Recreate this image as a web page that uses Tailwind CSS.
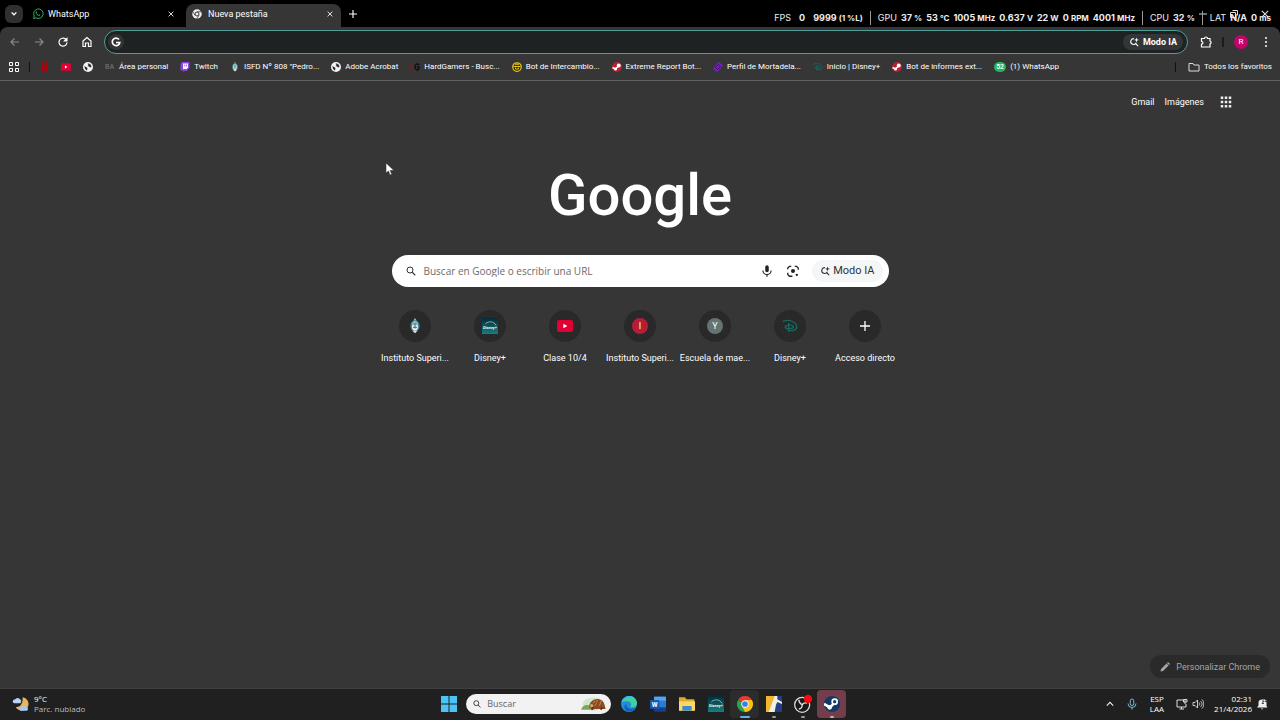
<!DOCTYPE html>
<html lang="es">
<head>
    <meta charset="UTF-8">
    <meta name="viewport" content="width=device-width, initial-scale=1.0">
    <title>Nueva pestaña</title>
    <script src="https://cdn.jsdelivr.net/npm/@tailwindcss/browser@4"></script>
</head>
<body class="relative flex flex-col min-h-screen bg-[#363636] text-white text-[8px] leading-3 font-['Roboto',sans-serif] overflow-x-hidden">

    <!-- Shared icons -->
    <svg class="absolute size-0">
        <symbol id="globe" viewBox="0 0 20 20">
            <circle cx="10" cy="10" r="10" fill="#f4f4f4"/>
            <path fill="#303030" d="M3 8l5 3 1 2-1 4c-3-1-5-4-5-9zM9 3c4-1 8 2 8 7l-3 1-2-2-3-1 2-2z"/>
        </symbol>
        <symbol id="steam" viewBox="0 0 20 20">
            <circle cx="10" cy="10" r="10" fill="#b3202f"/>
            <path d="M1 11l6 3 6-6" stroke="#fff" stroke-width="3.5" fill="none"/>
            <circle cx="13.5" cy="7" r="4" fill="#fff"/>
            <circle cx="7" cy="14" r="3" fill="#fff"/>
        </symbol>
        <symbol id="youtube" viewBox="0 0 24 18">
            <rect width="24" height="18" rx="3" fill="#e00034"/>
            <path d="M9.500 5.500v7l6-3.500z" fill="#fff"/>
        </symbol>
        <symbol id="emblem" viewBox="0 0 16 24">
            <path d="M5.500 4L8 0l2.500 4z" fill="#d8b45a"/>
            <ellipse cx="8" cy="12" rx="7" ry="8.500" fill="#3f8a8c"/>
            <ellipse cx="8" cy="12" rx="4.500" ry="7" fill="#eef3f5"/>
            <path d="M3.500 11a4.500 6 0 0 1 9 0z" fill="#6fb4d8"/>
            <path d="M5 14h6M8 8v8" stroke="#7a5a3a" stroke-width="1.500"/>
            <path d="M4 19l4 4 4-4z" fill="#d8e4ea"/>
        </symbol>
        <symbol id="disney-d" viewBox="0 0 24 20">
            <path d="M2 3c8-4 20 1 20 8 0 6-8 7-13 5M8 9c-5 1-4 5 2 5 5 0 8-1 7-3s-5-3-9-2M10 6v12" stroke="#17695f" stroke-width="2" fill="none" stroke-linecap="round"/>
        </symbol>
        <linearGradient id="tile" x1="0" y1="0" x2="0" y2="1">
            <stop offset="0" stop-color="#062a38"/>
            <stop offset="1" stop-color="#11827f"/>
        </linearGradient>
        <symbol id="search-spark" viewBox="0 0 24 24">
            <path d="M12 4a7 7 0 1 0 5.500 10M15 15l7 7" stroke="currentColor" stroke-width="2.600" fill="none"/>
            <path d="M18 1l1.500 4.500L24 7l-4.500 1.500L18 13l-1.500-4.500L12 7l4.500-1.500z" fill="currentColor"/>
        </symbol>
        <symbol id="close" viewBox="0 0 10 10">
            <path d="M1 1l8 8M9 1l-8 8" stroke="currentColor" stroke-width="1.400"/>
        </symbol>
        <symbol id="magnifier" viewBox="0 0 20 20">
            <circle cx="8" cy="8" r="6" fill="none" stroke="currentColor" stroke-width="2"/>
            <path d="M12.500 12.500l6 6" stroke="currentColor" stroke-width="2.200"/>
        </symbol>
    </svg>

    <!-- Tab strip -->
    <header class="flex items-end h-[27px] bg-black pl-[5px]">
        <button aria-label="Buscar pestañas" class="self-center size-[18px] rounded-md bg-[#303030] flex items-center justify-center">
            <svg class="size-2" viewBox="0 0 10 10"><path d="M2 3l3 3 3-3" stroke="#fff" stroke-width="1.600" fill="none"/></svg>
        </button>
        <div class="flex items-center h-[23px] w-[155px] pl-[9px] pr-1 pb-1">
            <svg class="size-3" viewBox="0 0 24 24">
                <path d="M3 21l1.500-5A9.500 9.500 0 1 1 8 19.600z" stroke="#27b357" stroke-width="2" fill="none"/>
                <path d="M8 7c1-1 2 0 2 2l-1 1c1 2 2 3 4 4l1-1c2 0 3 1 2 2-3 3-11-4-8-8z" fill="#27b357"/>
            </svg>
            <span class="ml-1 grow text-[9px]">WhatsApp</span>
            <button aria-label="Cerrar WhatsApp"><svg class="size-1.5"><use href="#close"/></svg></button>
        </div>
        <div class="flex items-center h-[23px] w-[155px] pl-1.5 pr-2 pb-1 ml-2 rounded-t-lg bg-[#363636]">
            <svg class="size-2.5" viewBox="0 0 20 20">
                <circle cx="10" cy="10" r="9.500" fill="#eee"/>
                <path d="M10 5.500h9M6 12.500l-4.500-7.500M14 12.500l-4.500 7.500" stroke="#363636" stroke-width="1.500"/>
                <circle cx="10" cy="10" r="4" fill="#eee" stroke="#363636" stroke-width="2"/>
            </svg>
            <span class="ml-1.5 grow text-[9px]">Nueva pestaña</span>
            <button aria-label="Cerrar Nueva pestaña"><svg class="size-1.5"><use href="#close"/></svg></button>
        </div>
        <button aria-label="Nueva pestaña" class="self-center ml-2">
            <svg class="size-2" viewBox="0 0 10 10"><path d="M5 0v10M0 5h10" stroke="#fff" stroke-width="1.400"/></svg>
        </button>
        <div class="ml-auto self-center flex items-center gap-[23px] pr-[11px]">
            <button aria-label="Minimizar"><svg class="size-2" viewBox="0 0 8 8"><path d="M0 4h8" stroke="#ddd"/></svg></button>
            <button aria-label="Restaurar"><svg class="size-2" viewBox="0 0 8 8"><path d="M.5 2.500h5v5h-5zM2.500.5h5v5" stroke="#ddd" fill="none"/></svg></button>
            <button aria-label="Cerrar"><svg class="size-2 text-[#ddd]"><use href="#close"/></svg></button>
        </div>
    </header>

    <!-- Performance overlay -->
    <div class="absolute top-3 right-[9px] flex items-center h-3 text-[9px] font-['Inter',sans-serif] font-bold text-[#eee] whitespace-nowrap">
        <span class="font-normal">FPS</span>
        <span class="ml-2">0</span>
        <span class="ml-2">9999 <small class="text-[8px]">(1 %L)</small></span>
        <span class="w-px h-3.5 mx-[7px] bg-[#999]"></span>
        <span class="font-normal">GPU</span>
        <span class="ml-1">37 <small class="text-[8px]">%</small></span>
        <span class="ml-1">53 <small class="text-[8px]">°C</small></span>
        <span class="ml-1">1005 <small class="text-[8px]">MHz</small></span>
        <span class="ml-1">0.637 <small class="text-[8px]">V</small></span>
        <span class="ml-1">22 <small class="text-[8px]">W</small></span>
        <span class="ml-1">0 <small class="text-[8px]">RPM</small></span>
        <span class="ml-1">4001 <small class="text-[8px]">MHz</small></span>
        <span class="w-px h-3.5 mx-[7px] bg-[#999]"></span>
        <span class="font-normal">CPU</span>
        <span class="ml-1">32 <small class="text-[8px]">%</small></span>
        <span class="w-px h-3.5 mx-[7px] bg-[#999]"></span>
        <span class="font-normal">LAT</span>
        <span class="ml-1">N/A</span>
        <span class="ml-1">0 <small class="text-[8px]">ms</small></span>
    </div>

    <!-- Toolbar -->
    <div class="bg-black">
    <div class="flex items-center h-[29px] px-2 rounded-t-lg bg-[#363636]">
        <nav class="flex items-center gap-3 pl-px">
            <button aria-label="Atrás"><svg class="size-3 text-[#8a8a8a]" viewBox="0 0 24 24"><path d="M20 12H4M11 5l-7 7 7 7" stroke="currentColor" stroke-width="2.400" fill="none"/></svg></button>
            <button aria-label="Adelante"><svg class="size-3 text-[#8a8a8a]" viewBox="0 0 24 24"><path d="M4 12h16M13 5l7 7-7 7" stroke="currentColor" stroke-width="2.400" fill="none"/></svg></button>
            <button aria-label="Recargar"><svg class="size-3" viewBox="0 0 24 24"><path d="M20 13a8 8 0 1 1-3-7l3 3" stroke="#fff" stroke-width="2.400" fill="none"/><path d="M21 2v9h-9z" fill="#fff"/></svg></button>
            <button aria-label="Inicio"><svg class="size-3" viewBox="0 0 24 24"><path d="M4 10l8-7 8 7v11h-5v-7H9v7H4z" stroke="#fff" stroke-width="2.400" fill="none"/></svg></button>
        </nav>
        <label class="flex items-center grow h-6 ml-[11px] pl-[3px] pr-1 rounded-full border border-[#4f9f98] bg-[#1f2223]">
            <span class="size-4 rounded-full bg-[#333] flex items-center justify-center">
                <svg class="size-2.5" viewBox="0 0 20 20"><path d="M16 5a7.500 7.500 0 1 0 1.500 6H10" stroke="#fff" stroke-width="3.400" fill="none"/></svg>
            </span>
            <input type="text" aria-label="Barra de direcciones" class="grow bg-transparent outline-none px-2">
            <button class="flex items-center gap-1 h-4 px-1.5 rounded-full bg-[#333638] text-[9px] font-bold whitespace-nowrap">
                <svg class="size-2.5"><use href="#search-spark"/></svg>Modo IA
            </button>
        </label>
        <button aria-label="Extensiones" class="ml-3">
            <svg class="size-3" viewBox="0 0 24 24"><path d="M3 5h6c0-4 6-4 6 0h5v5c3 1 3 5 0 6v6H3v-6c4 0 4-5 0-5z" stroke="#fff" stroke-width="2.400" fill="none"/></svg>
        </button>
        <span class="w-0.5 h-2.5 bg-[#1c1c1c] ml-2.5"></span>
        <button class="size-3.5 ml-2.5 rounded-full bg-[#c2056b] text-center leading-[14px]">R</button>
        <button aria-label="Menú" class="ml-3"><svg class="size-3" viewBox="0 0 12 12" fill="#fff"><circle cx="6" cy="2" r="1"/><circle cx="6" cy="6" r="1"/><circle cx="6" cy="10" r="1"/></svg></button>
    </div>
    </div>

    <!-- Bookmarks -->
    <nav class="flex items-center gap-3 h-[25px] px-2 pb-[3px] border-b border-[#606060] whitespace-nowrap">
        <button aria-label="Grupos de pestañas"><svg class="size-3" viewBox="0 0 12 12"><path d="M1.500 1.500h3v3h-3zM7.500 1.500h3v3h-3zM1.500 7.500h3v3h-3zM7.500 7.500h3v3h-3z" stroke="#fff" fill="none"/></svg></button>
        <span class="w-px h-2.5 -mx-[3px] bg-[#111]"></span>
        <a href="#" aria-label="Netflix"><svg class="size-2.5" viewBox="0 0 10 10"><path d="M2 0h2l2 5V0h2v10H6L4 5v5H2z" fill="#b00010"/></svg></a>
        <a href="#" aria-label="YouTube"><svg class="w-2.5 h-2"><use href="#youtube"/></svg></a>
        <a href="#" aria-label="Sitio"><svg class="size-2.5"><use href="#globe"/></svg></a>
        <a href="#" class="flex items-center gap-1"><span class="w-2.5 text-[7px] font-bold text-[#666]">BA</span>Área personal</a>
        <a href="#" class="flex items-center gap-1">
            <svg class="size-2.5" viewBox="0 0 20 20"><path d="M4 0h15v12l-6 6H9l-3 2v-3H1V4z" fill="#8a43e8"/><path d="M6 3h10v8l-3 3H6z" fill="#fff"/><path d="M9.500 5v4M13 5v4" stroke="#8a43e8" stroke-width="1.600"/></svg>Twitch
        </a>
        <a href="#" class="flex items-center gap-1"><svg class="size-2.5"><use href="#emblem"/></svg>ISFD Nº 808 "Pedro...</a>
        <a href="#" class="flex items-center gap-1"><svg class="size-2.5"><use href="#globe"/></svg>Adobe Acrobat</a>
        <a href="#" class="flex items-center gap-1">
            <svg class="size-2.5" viewBox="0 0 20 20"><path d="M2 3v14M2 10h5M7 3v14" stroke="#8a1418" stroke-width="2"/><path d="M18 6c-3-4-8-2-8 4s6 8 8 3v-3h-4" stroke="#111" stroke-width="3" fill="none"/></svg>HardGamers - Busc...
        </a>
        <a href="#" class="flex items-center gap-1">
            <svg class="size-2.5" viewBox="0 0 20 20"><circle cx="10" cy="10" r="8.500" stroke="#e8c81c" stroke-width="2.500" fill="#2a2710"/><path d="M3 9h14M6 6l4-2 4 2M7 11v3h6v-3" stroke="#e8c81c" stroke-width="2" fill="none"/></svg>Bot de Intercambio...
        </a>
        <a href="#" class="flex items-center gap-1"><svg class="size-2.5"><use href="#steam"/></svg>Extreme Report Bot...</a>
        <a href="#" class="flex items-center gap-1">
            <svg class="size-2.5" viewBox="0 0 20 20"><path d="M12 0l8 7-12 13-8-7z" fill="#8a12e0"/><path d="M11 5l4 4-6 6-4-4z" stroke="#3a0868" stroke-width="2" fill="none"/></svg>Perfil de Mortadela...
        </a>
        <a href="#" class="flex items-center gap-1"><svg class="size-2.5"><use href="#disney-d"/></svg>Inicio | Disney+</a>
        <a href="#" class="flex items-center gap-1"><svg class="size-2.5"><use href="#steam"/></svg>Bot de informes ext...</a>
        <a href="#" class="flex items-center gap-1"><span class="w-3 h-2.5 rounded-full bg-[#25b35a] text-[7px] leading-[10px] text-center font-semibold">52</span>(1) WhatsApp</a>
        <span class="ml-auto w-px h-2.5 bg-[#111]"></span>
        <a href="#" class="flex items-center gap-1"><svg class="size-3" viewBox="0 0 24 24"><path d="M2 5h8l2 3h10v12H2z" stroke="#ddd" stroke-width="2" fill="none"/></svg>Todos los favoritos</a>
    </nav>

    <!-- New tab page -->
    <main class="relative grow flex flex-col">
        <div class="flex justify-end items-center gap-2.5 pr-12 pt-3.5 h-7 text-[9px]">
            <a href="#">Gmail</a>
            <a href="#">Imágenes</a>
            <button aria-label="Aplicaciones de Google" class="ml-1.5">
                <svg class="size-3" viewBox="0 0 12 12"><path d="M2 .5v11M6 .5v11M10 .5v11" stroke="#eee" stroke-width="2.500" stroke-dasharray="2.500 1.750"/></svg>
            </button>
        </div>
        <h1 class="mt-10 h-[106px] text-center text-[58px] leading-[92px] font-medium">Google</h1>
        <label class="flex items-center w-[497px] h-8 mx-auto pl-3.5 pr-1.5 rounded-full bg-white text-[#333]">
            <svg class="size-2.5"><use href="#magnifier"/></svg>
            <input type="text" placeholder="Buscar en Google o escribir una URL" class="grow ml-2 text-[10px] font-['Open_Sans',sans-serif] outline-none placeholder:text-[#6b6b6b]">
            <button aria-label="Buscar por voz"><svg class="size-3.5" viewBox="0 0 24 24"><rect x="9" y="2" width="6" height="12" rx="3" fill="#222"/><path d="M5 11a7 7 0 0 0 14 0M12 18v4" stroke="#222" stroke-width="2" fill="none"/></svg></button>
            <button aria-label="Buscar por imagen" class="ml-3"><svg class="size-3.5" viewBox="0 0 24 24"><path d="M3 9V7l3-3h3M15 4h3l3 3v3M3 15v3l3 3h5" stroke="#222" stroke-width="2.200" fill="none"/><circle cx="12" cy="12" r="3.500" fill="#222"/><circle cx="18.500" cy="18.500" r="2" fill="#222"/></svg></button>
            <button class="flex items-center gap-[3px] h-[22px] ml-3 px-2 rounded-full bg-[#f5f6f8] text-[11px] whitespace-nowrap"><svg class="size-2.5"><use href="#search-spark"/></svg>Modo IA</button>
        </label>
        <div class="grid grid-cols-7 w-[525px] mx-auto mt-[23px] text-center text-[9px] whitespace-nowrap">
            <a href="#" class="flex flex-col items-center gap-2.5"><span class="size-8 rounded-full bg-[#292929] flex items-center justify-center"><svg class="size-4"><use href="#emblem"/></svg></span>Instituto Superi...</a>
            <a href="#" class="flex flex-col items-center gap-2.5"><span class="size-8 rounded-full bg-[#292929] flex items-center justify-center"><svg class="size-4" viewBox="0 0 24 24"><rect width="24" height="24" fill="url(#tile)"/><path d="M5 9c5-5 13-4 16 2" stroke="#b9e6e6" fill="none"/><text x="12" y="16" font-size="6" font-weight="700" font-style="italic" text-anchor="middle" fill="#e8ffff">Disney+</text></svg></span>Disney+</a>
            <a href="#" class="flex flex-col items-center gap-2.5"><span class="size-8 rounded-full bg-[#292929] flex items-center justify-center"><svg class="w-4 h-3"><use href="#youtube"/></svg></span>Clase 10/4</a>
            <a href="#" class="flex flex-col items-center gap-2.5"><span class="size-8 rounded-full bg-[#292929] flex items-center justify-center"><span class="size-4 leading-4 rounded-full bg-[#b51e33]">I</span></span>Instituto Superi...</a>
            <a href="#" class="flex flex-col items-center gap-2.5"><span class="size-8 rounded-full bg-[#292929] flex items-center justify-center"><span class="size-4 leading-4 rounded-full bg-[#66736f]">Y</span></span>Escuela de mae...</a>
            <a href="#" class="flex flex-col items-center gap-2.5"><span class="size-8 rounded-full bg-[#292929] flex items-center justify-center"><svg class="size-4"><use href="#disney-d"/></svg></span>Disney+</a>
            <button class="flex flex-col items-center gap-2.5"><span class="size-8 rounded-full bg-[#292929] flex items-center justify-center"><svg class="size-2.5" viewBox="0 0 10 10"><path d="M5 0v10M0 5h10" stroke="#fff" stroke-width="1.300"/></svg></span>Acceso directo</button>
        </div>
        <button class="absolute right-2.5 bottom-2.5 flex items-center gap-1.5 h-[23px] px-2.5 rounded-full bg-[#2a2a2a] text-[#a5a5a5] text-[9px]">
            <svg class="size-2.5" viewBox="0 0 20 20"><path d="M1 19l1-5L13 3l4 4L6 18zM14 2l2-2 4 4-2 2z" fill="#a5a5a5"/></svg>Personalizar Chrome
        </button>
        <!-- Mouse pointer -->
        <svg class="absolute left-[386px] top-[82px] w-2 h-3" viewBox="0 0 8 12"><path d="M0 0v10l2.500-2L4 12l1.800-.8L4.200 7.500H8z" fill="#fff" stroke="#222" stroke-width=".5"/></svg>
    </main>

    <!-- Taskbar -->
    <footer class="grid grid-cols-[1fr_auto_1fr] items-center h-8 pb-px bg-[#202020] border-t border-[#404040]">
        <button class="flex items-center gap-1 pl-3 text-left leading-2.5 font-['Open_Sans',sans-serif]">
            <svg class="size-[18px]" viewBox="0 0 24 24"><path d="M14 3a9 9 0 1 1-9 13c6 1 10-5 9-13z" fill="#e9b45a"/><path d="M3 11h8a3 3 0 0 0 0-5 4 4 0 0 0-7 0 2.500 2.500 0 0 0-1 5z" fill="#bcd3f5"/><path d="M12 21h8a3 3 0 0 0 0-5 4 4 0 0 0-7 0 2.500 2.500 0 0 0-1 5z" fill="#a7c6f2"/></svg>
            <span>9°C<br><span class="text-[#bbb]">Parc. nublado</span></span>
        </button>
        <div class="flex items-center">
            <button aria-label="Inicio" class="w-[29px] flex justify-center"><svg class="size-4" viewBox="0 0 16 16"><path d="M0 0h7.500v7.500H0zM8.500 0H16v7.500H8.500zM0 8.500h7.500V16H0zM8.500 8.500H16V16H8.500z" fill="#4cc2f5"/></svg></button>
            <label class="flex items-center w-[145px] h-5 mx-[3px] pl-[7px] pr-1 rounded-full bg-[#f2f2f2] text-[#222]">
                <svg class="size-2.5"><use href="#magnifier"/></svg>
                <input type="text" placeholder="Buscar" class="grow min-w-0 ml-1.5 text-[9px] font-['Open_Sans',sans-serif] outline-none placeholder:text-[#666]">
                <svg class="w-8 h-4" viewBox="0 0 32 16"><ellipse cx="15" cy="8" rx="13" ry="8" fill="#cfe6cf"/><path d="M0 15c2-6 8-8 14-3l3 3z" fill="#7fa650"/><path d="M10 12c0-12 17-14 19-2l1 4H13z" fill="#8a4b22"/><path d="M15 7l2-3M19 6l1-3M23 7l2-3M17 10l2-3M22 10l2-3" stroke="#d39a5c"/><circle cx="13" cy="10" r="2" fill="#d8a56e"/><path d="M13 15l2-3M24 15l2-3" stroke="#5e2f14" stroke-width="2"/></svg>
            </label>
            <button aria-label="Edge" class="w-[29px] flex justify-center"><svg class="size-4" viewBox="0 0 24 24">
                <circle cx="12" cy="12" r="12" fill="#1d8fe0"/><path d="M1 9C4-2 22-3 24 10c0 6-6 8-10 6 3-4 0-8-4-8-4 0-7 1-9 1z" fill="#45cfa0"/><path d="M1 10C4-1 16-2 20 3 12 1 5 4 1 10z" fill="#3bbdf0"/><path d="M8 12c-1 6 6 9 14 6-4 5-12 7-15 3-3-3-2-8 1-9z" fill="#1560b5"/></svg></button>
            <button aria-label="Word" class="w-[29px] flex justify-center"><svg class="size-4" viewBox="0 0 24 24"><rect x="6" y="1" width="18" height="22" rx="2" fill="#2b7cd3"/><path d="M6 1h18v6H6z" fill="#52a5ee"/><path d="M6 17h18v6H6z" fill="#123f8c"/><rect y="6" width="14" height="13" rx="1.500" fill="#1b56b0"/><text x="7" y="16" font-size="10" font-weight="700" text-anchor="middle" fill="#fff">W</text></svg></button>
            <button aria-label="Explorador" class="w-[29px] flex justify-center"><svg class="size-4" viewBox="0 0 24 24"><path d="M0 2h9l2 3h12v17H0z" fill="#e5a92a"/><path d="M0 8h24v14H0z" fill="#ffd768"/><path d="M5 22v-7h14v7z" fill="#3c8ec9"/></svg></button>
            <button aria-label="Disney+" class="w-[29px] flex justify-center"><svg class="size-4" viewBox="0 0 24 24"><rect width="24" height="24" fill="url(#tile)"/><path d="M5 9c5-5 13-4 16 2" stroke="#b9e6e6" fill="none"/><text x="12" y="16" font-size="6" font-weight="700" font-style="italic" text-anchor="middle" fill="#e8ffff">Disney+</text></svg></button>
            <button aria-label="Chrome" class="relative w-[29px] h-7 rounded bg-[#2c2c2c] flex items-center justify-center"><svg class="size-4" viewBox="0 0 24 24"><path d="M12 12L1.600 6A12 12 0 0 1 22.400 6z" fill="#e33b2e"/><path d="M12 12V6h10.400A12 12 0 0 1 12 24z" fill="#fbc116"/><path d="M12 12v12A12 12 0 0 1 1.600 6z" fill="#2ba24c"/><path d="M12 24l5-9-5-3-5 3z" fill="#fbc116"/><path d="M12 24l-5-9H3z" fill="#2ba24c"/><circle cx="12" cy="12" r="5.500" fill="#fff"/><circle cx="12" cy="12" r="4.300" fill="#3a7ff0"/></svg><span class="absolute bottom-0 w-2.5 h-0.5 rounded-full bg-[#5fb2e8]"></span></button>
            <button aria-label="Juego" class="relative w-[29px] h-7 flex items-center justify-center"><svg class="size-4" viewBox="0 0 24 24"><path d="M0 0h24v24H0z" fill="#f0efe8"/><path d="M0 0h13L4 24H0z" fill="#f1b532"/><path d="M13 24l2-11 2-4 7 3v12z" fill="#253d86"/><path d="M17 0h7v9l-7-4z" fill="#253d86"/></svg><span class="absolute bottom-0 w-1 h-0.5 rounded-full bg-[#999]"></span></button>
            <button aria-label="OBS" class="relative w-[29px] h-7 flex items-center justify-center"><svg class="size-5" viewBox="0 0 24 24"><circle cx="11" cy="13" r="9" fill="#1a1a1a" stroke="#ddd" stroke-width="1.500"/><path d="M7 7c0 4 2 5 4 6M17 11c-4-1-5 0-6 2M11 13c0 3-1 5-4 5" stroke="#ddd" stroke-width="1.600" fill="none"/><circle cx="18" cy="6" r="5" fill="#f20d14"/></svg><span class="absolute bottom-0 w-1 h-0.5 rounded-full bg-[#999]"></span></button>
            <button aria-label="Steam" class="relative w-[29px] h-7 rounded bg-[#743d4c] flex items-center justify-center"><svg class="size-4" viewBox="0 0 24 24"><circle cx="12" cy="12" r="12" fill="#123a66"/><path d="M0 12l9 5 7-7" stroke="#fff" stroke-width="4" fill="none"/><circle cx="16" cy="8.500" r="5" fill="#fff"/><circle cx="16" cy="8.500" r="2.500" fill="#123a66"/><circle cx="8.500" cy="17" r="3.500" fill="#fff"/></svg><span class="absolute bottom-0 w-1 h-0.5 rounded-full bg-[#d9a5b3]"></span></button>
        </div>
        <div class="flex items-center justify-end pr-3 leading-2.5 font-['Open_Sans',sans-serif]">
            <button aria-label="Iconos ocultos"><svg class="size-2" viewBox="0 0 10 10"><path d="M1 7l4-4 4 4" stroke="#eee" stroke-width="1.400" fill="none"/></svg></button>
            <button aria-label="Micrófono" class="ml-3"><svg class="size-3" viewBox="0 0 24 24"><rect x="8.500" y="2" width="7" height="13" rx="3.500" stroke="#79b8cc" stroke-width="2" fill="none"/><path d="M4 11a8 8 0 0 0 16 0M12 19v4" stroke="#79b8cc" stroke-width="2" fill="none"/></svg></button>
            <button class="ml-3 text-center">ESP<br>LAA</button>
            <button aria-label="Red y volumen" class="ml-3 flex gap-1"><svg class="size-3" viewBox="0 0 24 24"><path d="M15 4H2v14h18v-6M7 22h9M11 18v4M18 3v9M15 3h7v5h-7z" stroke="#ddd" stroke-width="2" fill="none"/></svg><svg class="size-3" viewBox="0 0 24 24"><path d="M2 9h4l5-5v16l-5-5H2zM14 9c2 2 2 4 0 6M17 6c4 4 4 8 0 12M20 3c5 5 5 13 0 18" stroke="#ddd" stroke-width="1.800" fill="none"/></svg></button>
            <button class="ml-2.5 text-right">02:31<br>21/4/2026</button>
            <button aria-label="Notificaciones" class="ml-1"><svg class="size-3" viewBox="0 0 24 24"><path d="M2 19l3-4V9c0-4 3-6 7-6l9 0v13l2 3zM9 21h6l-3 2z" fill="#eee"/><path d="M12 6h4l-4 5h4M18 3h4l-4 4h4" stroke="#202020" stroke-width="1.500" fill="none"/></svg></button>
        </div>
    </footer>

</body>
</html>
